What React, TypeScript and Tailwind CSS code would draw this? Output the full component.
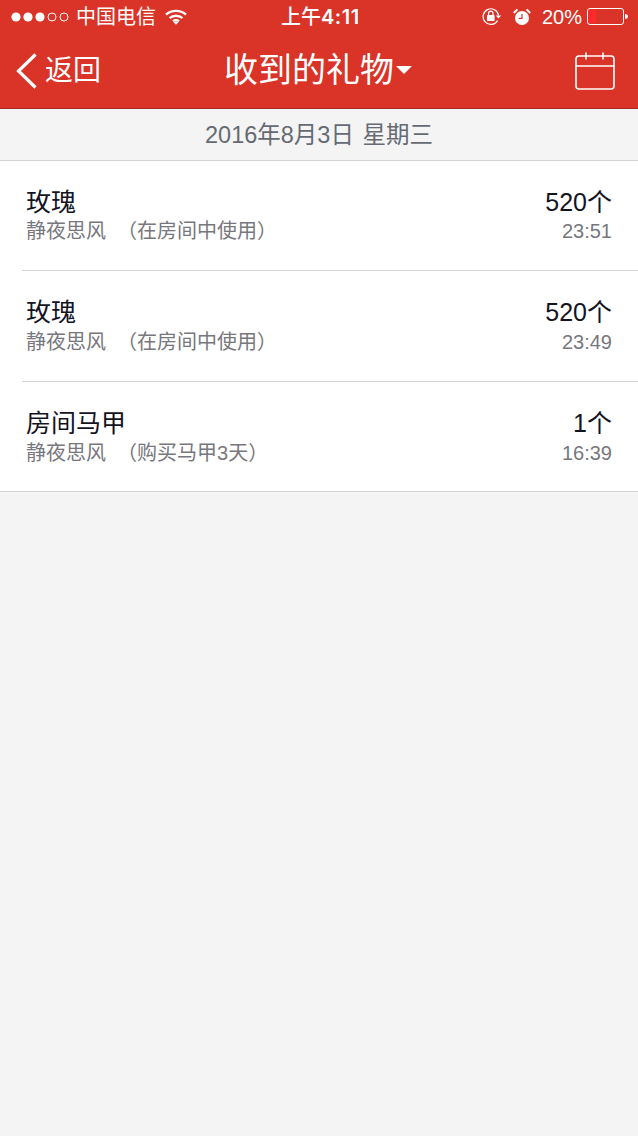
const font = "font-['Liberation_Sans','Noto_Sans_CJK_SC',sans-serif]";

function Row({ name, sub, count, time, height, titleHeight, last }: { name: string; sub: string; count: string; time: string; height: string; titleHeight: string; last?: boolean }) {
  return (
    <div className="pl-[22px]">
      <div className={`flex justify-between pl-1 pr-[26px] pt-[26px] ${height} ${last ? "" : "border-b border-[#d4d4d6]"}`}>
        <div className="flex flex-col">
          <div className={`${titleHeight} text-[25px] leading-[30px] text-[#14141f]`}>{name}</div>
          <div className="h-6 text-[20px] leading-6 text-[#77777d] whitespace-pre">{sub}</div>
        </div>
        <div className="flex flex-col items-end">
          <div className={`${titleHeight} text-[25px] leading-[30px] text-[#14141f]`}>{count}</div>
          <div className="h-6 text-[20px] leading-6 text-[#77777d]">{time}</div>
        </div>
      </div>
    </div>
  );
}

export default function App() {
  return (
    <div className={`flex h-[1136px] w-[638px] flex-col overflow-hidden bg-[#f4f4f4] ${font}`}>
      <header className="h-[109px] border-b border-[#a82a22] bg-[#da3327] text-white">
        <div className="relative flex h-[34px] items-center justify-between pl-[11px] pr-[10px]">
          <div className="flex items-center">
            <svg width="58" height="12" viewBox="0 0 58 12">
              <circle cx="5" cy="6" r="4.6" fill="#fff" />
              <circle cx="17" cy="6" r="4.6" fill="#fff" />
              <circle cx="29" cy="6" r="4.6" fill="#fff" />
              <circle cx="41" cy="6" r="4" fill="none" stroke="#fff" strokeWidth="1" />
              <circle cx="53" cy="6" r="4" fill="none" stroke="#fff" strokeWidth="1" />
            </svg>
            <span className="ml-[7px] text-[20px] leading-6">中国电信</span>
            <svg className="ml-[9px]" width="22" height="16" viewBox="0 0 22 16" fill="none" stroke="#fff" strokeWidth="2.4">
              <path d="M1 5.6C6.6 .6 15.4 .6 21 5.6" />
              <path d="M4.6 9.2C8.2 6 13.8 6 17.4 9.2" />
              <path d="M8 12.2c1.8-1.3 4.2-1.3 6 0" />
              <path d="M11 15.8 8.6 13.2c1.4-1 3.4-1 4.8 0Z" fill="#fff" stroke="none" />
            </svg>
          </div>
          <span className="absolute left-[281px] top-[5px] text-[20px] font-medium leading-6">
            上午<span className="font-['Inter'] font-semibold tracking-[0.5px]">4:11</span>
          </span>
          <div className="flex items-center">
            <svg width="20" height="18" viewBox="0 0 20 18" fill="none">
              <path d="M15.6 12.6A7.8 7.8 0 1 1 16.6 7.4" stroke="#fff" strokeWidth="1.2" />
              <path d="M13.8 7.6h5.4l-2.7 3Z" fill="#fff" />
              <rect x="5" y="7" width="7.6" height="6" rx=".8" fill="#fff" />
              <path d="M6.6 7V5.4a2.2 2.2 0 0 1 4.4 0V7" stroke="#fff" strokeWidth="1.2" />
            </svg>
            <svg className="ml-[11px]" width="18" height="18" viewBox="0 0 18 18" fill="none">
              <circle cx="9" cy="10" r="7" fill="#fff" />
              <path d="M9 6v4.4H5.6" stroke="#da3327" strokeWidth="1.2" />
              <path d="M.8 5 4.4 1.4M17.2 5l-3.6-3.6" stroke="#fff" strokeWidth="2" />
            </svg>
            <span className="ml-[11px] text-[20px] leading-6">20%</span>
            <svg className="ml-[5px]" width="41" height="18" viewBox="0 0 41 18" fill="none">
              <rect x=".5" y=".5" width="36" height="16" rx="2.5" stroke="#fff" />
              <rect x="2" y="2" width="7" height="13" fill="#ff2a2a" />
              <path d="M38 6c2 0 3 1 3 2.5S40 11 38 11Z" fill="#fff" />
            </svg>
          </div>
        </div>
        <div className="relative flex h-[74px] items-center justify-between pb-[1px] pl-4 pr-[23px]">
          <div className="flex items-center">
            <svg width="22" height="36" viewBox="0 0 22 36" fill="none" stroke="#fff" strokeWidth="3.2">
              <path d="M19.5 1.5 2.5 18l17 16.5" />
            </svg>
            <span className="ml-[7px] text-[28px] leading-8">返回</span>
          </div>
          <div className="absolute left-[224px] top-[16px] flex items-center">
            <span className="text-[34px] leading-10">收到的礼物</span>
            <span className="ml-[2px] h-0 w-0 border-x-[8.5px] border-t-[8px] border-x-transparent border-t-white" />
          </div>
          <svg width="40" height="38" viewBox="0 0 40 38" fill="none" stroke="#fff" strokeWidth="1.6">
            <rect x="1" y="4" width="38" height="33" rx="3" />
            <path d="M1 14h38M11 .5v7M28 .5v7" />
          </svg>
        </div>
      </header>
      <div className="flex h-[52px] items-center justify-center border-b border-[#d2d2d4] text-[23.5px] leading-7 text-[#666a72] [word-spacing:2px] whitespace-pre">
        2016年8月3日 星期三
      </div>
      <div className="border-b border-[#d2d2d4] bg-white">
        <Row height="h-[110px]" titleHeight="h-[32px]" name="玫瑰" sub="静夜思风  （在房间中使用）" count="520个" time="23:51" />
        <Row height="h-[111px]" titleHeight="h-[33px]" name="玫瑰" sub="静夜思风  （在房间中使用）" count="520个" time="23:49" />
        <Row height="h-[109px]" titleHeight="h-[33px]" name="房间马甲" sub="静夜思风  （购买马甲3天）" count="1个" time="16:39" last />
      </div>
    </div>
  );
}
